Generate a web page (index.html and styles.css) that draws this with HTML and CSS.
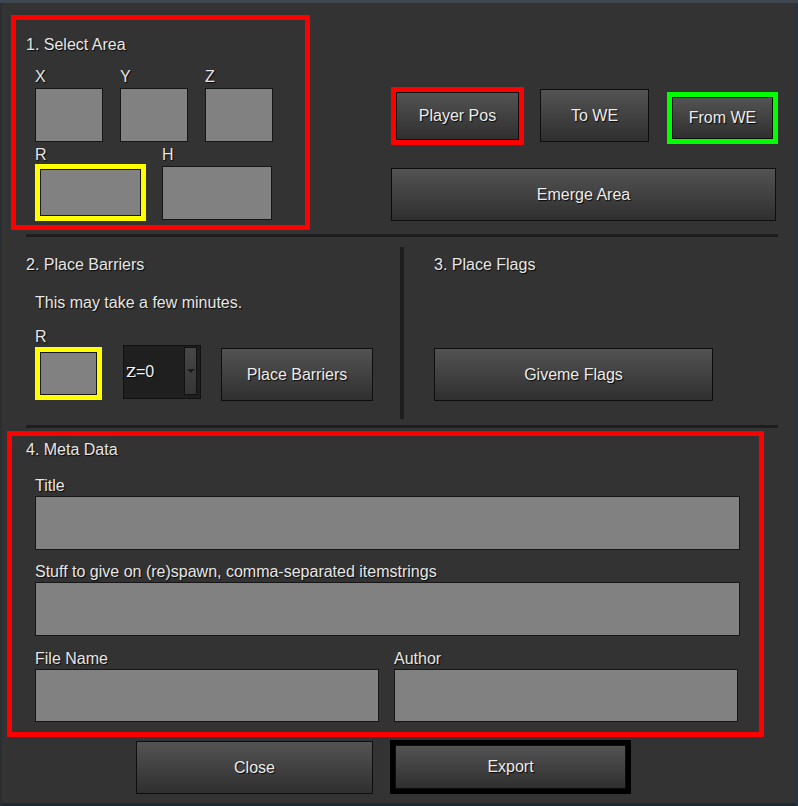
FILE: index.html
```html
<!DOCTYPE html>
<html lang="en">
<head>
<meta charset="utf-8">
<title>Select Area</title>
<link rel="stylesheet" href="styles.css">
</head>
<body>
<div class="window">
  <div class="top">
    <section class="area1 hl-red">
      <div class="txt">1. Select Area</div>
      <div class="xyz">
        <div class="field"><div class="txt lbl">X</div><input class="inp w68" type="text"></div>
        <div class="field"><div class="txt lbl">Y</div><input class="inp w68" type="text"></div>
        <div class="field"><div class="txt lbl">Z</div><input class="inp w68" type="text"></div>
      </div>
      <div class="rh">
        <div class="field"><div class="txt lbl0">R</div><div class="hl-yellow r1"><input class="inp fill" type="text"></div></div>
        <div class="field"><div class="txt lbl0">H</div><input class="inp h1" type="text"></div>
      </div>
    </section>
    <div class="tools">
      <div class="btnrow">
        <div class="hl-red pp"><button class="btn fill">Player Pos</button></div>
        <button class="btn towe">To WE</button>
        <div class="hl-green fromwe"><button class="btn fill">From WE</button></div>
      </div>
      <button class="btn emerge">Emerge Area</button>
    </div>
  </div>
  <div class="hsep sep1"></div>
  <div class="mid">
    <section class="col2">
      <div class="txt title2">2. Place Barriers</div>
      <div class="txt desc">This may take a few minutes.</div>
      <div class="txt rlbl">R</div>
      <div class="ctrls">
        <div class="hl-yellow r2"><input class="inp fill" type="text"></div>
        <div class="dropdown">
          <span class="ddtext txt"><span class="z">z</span>=0</span>
          <span class="ddbtn"><span class="tri"></span></span>
        </div>
        <button class="btn barriers">Place Barriers</button>
      </div>
    </section>
    <div class="vsep"></div>
    <section class="col3">
      <div class="txt title2">3. Place Flags</div>
      <button class="btn flags">Giveme Flags</button>
    </section>
  </div>
  <div class="hsep sep2"></div>
  <section class="meta hl-red">
    <div class="txt mtitle">4. Meta Data</div>
    <div class="txt mlbl first">Title</div>
    <input class="inp wide" type="text">
    <div class="txt mlbl">Stuff to give on (re)spawn, comma-separated itemstrings</div>
    <input class="inp wide" type="text">
    <div class="pair">
      <div class="field"><div class="txt mlbl plbl">File Name</div><input class="inp half" type="text"></div>
      <div class="field"><div class="txt mlbl plbl">Author</div><input class="inp half" type="text"></div>
    </div>
  </section>
  <div class="bottom">
    <button class="btn close">Close</button>
    <div class="hl-black export"><button class="btn fill">Export</button></div>
  </div>
</div>
</body>
</html>
```
FILE: styles.css
```css
* { box-sizing: border-box; }
html, body { margin: 0; padding: 0; }
body {
  background: #22384d;
  font-family: "Liberation Sans", Arial, sans-serif;
  font-size: 16px;
  color: #e6e6e6;
}
.window {
  width: 798px;
  height: 806px;
  background: #333333;
  display: flex;
  flex-direction: column;
  overflow: hidden;
  box-shadow: inset 0 3px 0 #3e4750, inset 2px 0 0 #2a2e33, inset -2px 0 0 #243444, inset 0 -3px 0 #1c2935;
}
.txt {
  line-height: 18px;
  white-space: nowrap;
  text-shadow: 1px 1px 1px rgba(0, 0, 0, 0.85);
}
.inp {
  display: block;
  margin: 0;
  padding: 0;
  background: #818181;
  border: 1px solid #161616;
  outline: none;
  font: inherit;
}
.fill { width: 100%; height: 100%; }
.btn {
  display: block;
  margin: 0;
  padding: 0;
  font-family: "Liberation Sans", Arial, sans-serif;
  font-size: 16px;
  color: #ececec;
  text-shadow: 1px 1px 1px rgba(0, 0, 0, 0.9);
  background: linear-gradient(#535353, #2f2f2f);
  border: 1px solid #0e0e0e;
  border-radius: 0;
}
.hl-red { border: 5px solid #ff0000; }
.hl-yellow { border: 5px solid #ffff00; }
.hl-green { border: 5px solid #00ff00; }
.hl-black { border: 5px solid #000000; }

/* row 1 */
.top {
  display: flex;
  align-items: flex-start;
  margin-top: 15px;
  padding-left: 11px;
}
.area1 {
  width: 299px;
  height: 215px;
  padding: 16px 0 0 10px;
}
.field { display: flex; flex-direction: column; }
.lbl { margin-bottom: 2px; }
.xyz {
  display: flex;
  gap: 17px;
  margin: 14px 0 0 9px;
}
.w68 { width: 68px; height: 54px; }
.rh {
  display: flex;
  gap: 16px;
  margin: 4px 0 0 9px;
}
.r1 { width: 111px; height: 57px; }
.h1 { width: 110px; height: 54px; margin-top: 2px; }

.tools { margin-left: 81px; }
.btnrow {
  display: flex;
  align-items: flex-start;
  margin-top: 72px;
}
.pp { width: 133px; height: 58px; }
.towe { width: 109px; height: 53px; margin: 2px 0 0 16px; }
.fromwe { width: 111px; height: 52px; margin: 5px 0 0 18px; }
.emerge { width: 385px; height: 53px; margin-top: 23px; }

.hsep {
  height: 3px;
  width: 752px;
  margin-left: 26px;
  background: #1d1d1d;
  flex: none;
}
.sep1 { margin-top: 4px; }

/* row 2 */
.mid {
  display: flex;
  height: 188px;
  flex: none;
}
.col2 {
  width: 400px;
  padding-left: 26px;
}
.title2 { margin-top: 19px; }
.desc { margin: 20px 0 0 9px; }
.rlbl { margin: 16px 0 0 9px; line-height: 17px; }
.ctrls {
  display: flex;
  align-items: flex-start;
  margin-left: 9px;
}
.r2 { width: 67px; height: 53px; margin-top: 2px; }
.dropdown {
  width: 78px;
  height: 54px;
  margin-left: 21px;
  background: #1f1f1f;
  border: 1px solid #111;
  display: flex;
  justify-content: space-between;
  padding: 1px 3px 3px 2px;
}
.ddtext { align-self: center; font-size: 16px; color: #f0f0f0; line-height: 20px; }
.z { font-family: "DejaVu Serif", serif; font-size: 19px; }
.ddbtn {
  width: 13px;
  background: linear-gradient(#474747, #353535);
  border: 1px solid #111;
  display: flex;
  align-items: center;
  justify-content: center;
}
.tri {
  width: 0;
  height: 0;
  border-left: 4px solid transparent;
  border-right: 4px solid transparent;
  border-top: 4px solid #1a1a1a;
}
.barriers { width: 152px; height: 53px; margin: 3px 0 0 20px; }
.vsep {
  width: 4px;
  height: 172px;
  margin-top: 10px;
  background: #1d1d1d;
}
.col3 { padding-left: 30px; }
.flags { width: 279px; height: 53px; margin-top: 74px; }

/* meta */
.sep2 { margin-top: 0; }
.meta {
  width: 757px;
  height: 306px;
  margin: 3px 0 0 7px;
  padding: 5px 0 0 23px;
  flex: none;
}
.mtitle { margin-left: -9px; }
.mlbl { margin: 13px 0 1px 0; }
.mlbl.first { margin-top: 18px; }
.mlbl.plbl { margin: 14px 0 1px 0; }
.wide { width: 705px; height: 54px; }
.pair { display: flex; gap: 15px; margin-top: 0; }
.half { width: 344px; height: 53px; }

/* bottom */
.bottom {
  display: flex;
  align-items: flex-start;
  margin-top: 3px;
  padding-left: 136px;
}
.close { width: 237px; height: 53px; margin-top: 1px; }
.export { width: 241px; height: 54px; margin-left: 17px; }
```
